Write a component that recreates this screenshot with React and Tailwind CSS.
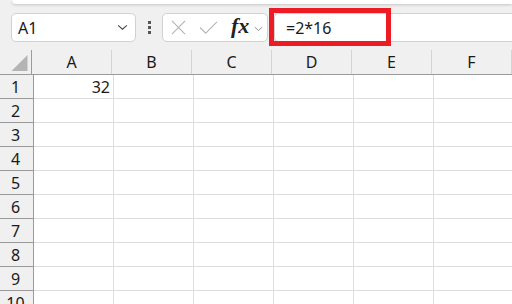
import React from "react";

const cols = ["A", "B", "C", "D", "E", "F"];
const rows = [1, 2, 3, 4, 5, 6, 7, 8, 9, 10];

function Chevron({ className }) {
  return (
    <svg viewBox="0 0 12 8" className={className} fill="none">
      <path d="M1 1.5 L6 6 L11 1.5" stroke="currentColor" strokeWidth="1.2" />
    </svg>
  );
}

export default function App() {
  return (
    <div
      className="relative w-[512px] h-[304px] overflow-hidden bg-[#f0f0f0] text-[#1a1a1a]"
      style={{ fontFamily: '"Noto Sans", "Open Sans", sans-serif' }}
    >
      {/* ribbon edge */}
      <div className="ml-[12px] h-[4px] bg-white rounded-bl-[6px] shadow-[0_1px_3px_rgba(0,0,0,0.18)]" />

      {/* formula bar */}
      <div className="flex items-start h-[46px] pt-[9px] pl-[11px]">
        <div className="flex items-center w-[125px] h-[29px] bg-white border border-[#d2d2d2] rounded-[5px] pl-[6px] pr-[7px]">
          <span className="text-[16px] leading-none flex-1">A1</span>
          <Chevron className="w-[11px] h-[7px] text-[#444]" />
        </div>
        <div className="flex flex-col items-center gap-[2px] w-[26px] pt-[8px]">
          <div className="w-[3px] h-[3px] bg-[#555]" />
          <div className="w-[3px] h-[3px] bg-[#555]" />
          <div className="w-[3px] h-[3px] bg-[#555]" />
        </div>
        <div className="flex items-center w-[106px] h-[29px] bg-white border border-[#d2d2d2] rounded-[5px] pl-[8px]">
          <svg viewBox="0 0 16 16" className="w-[15px] h-[15px] text-[#b5b5b5]" fill="none">
            <path d="M1 1 L15 15 M15 1 L1 15" stroke="currentColor" strokeWidth="1.2" />
          </svg>
          <svg viewBox="0 0 20 16" className="ml-[13px] w-[19px] h-[15px] text-[#b5b5b5]" fill="none">
            <path d="M1 8 L7 14 L19 2" stroke="currentColor" strokeWidth="1.2" />
          </svg>
          <span
            className="ml-[13px] text-[22px] italic font-semibold leading-none text-[#222] -mt-[3px]"
            style={{ fontFamily: '"Liberation Serif", "DejaVu Serif", serif' }}
          >
            fx
          </span>
          <Chevron className="ml-[5px] mt-[2px] w-[9px] h-[6px] text-[#888]" />
        </div>
        <div className="flex items-center ml-[6px] flex-1 h-[29px] bg-white border border-[#d2d2d2] border-r-0 rounded-l-[5px] pl-[11px]">
          <span className="text-[16px] leading-none">=2*16</span>
        </div>
      </div>

      {/* red annotation */}
      <div className="absolute left-[269px] top-[8px] w-[122px] h-[38px] border-[5px] border-[#ed1c24]" />

      {/* grid */}
      <div className="flex h-[25px] border-b border-[#9b9b9b]">
        <div className="relative w-[34px] border-r border-[#9b9b9b]">
          <svg viewBox="0 0 16 16" className="absolute right-[3px] bottom-[3px] w-[17px] h-[16px]">
            <path d="M16 0 L16 16 L0 16 Z" fill="#b4b4b4" />
          </svg>
        </div>
        {cols.map((c) => (
          <div
            key={c}
            className="w-[80px] shrink-0 flex items-center justify-center border-r border-[#d4d4d4] text-[16px] leading-none"
          >
            {c}
          </div>
        ))}
      </div>
      {rows.map((r) => (
        <div key={r} className="flex h-[24px]">
          <div className="w-[34px] shrink-0 flex items-center justify-center border-r border-b border-[#9b9b9b] bg-[#f0f0f0] text-[16px] leading-none">
            <span className="ml-[-2px]">{r}</span>
          </div>
          {cols.map((c) => (
            <div
              key={c}
              className="w-[80px] shrink-0 flex items-center justify-end pr-[3px] bg-white border-r border-b border-[#dedede] text-[16px] leading-none"
            >
              {r === 1 && c === "A" ? "32" : ""}
            </div>
          ))}
        </div>
      ))}
    </div>
  );
}
